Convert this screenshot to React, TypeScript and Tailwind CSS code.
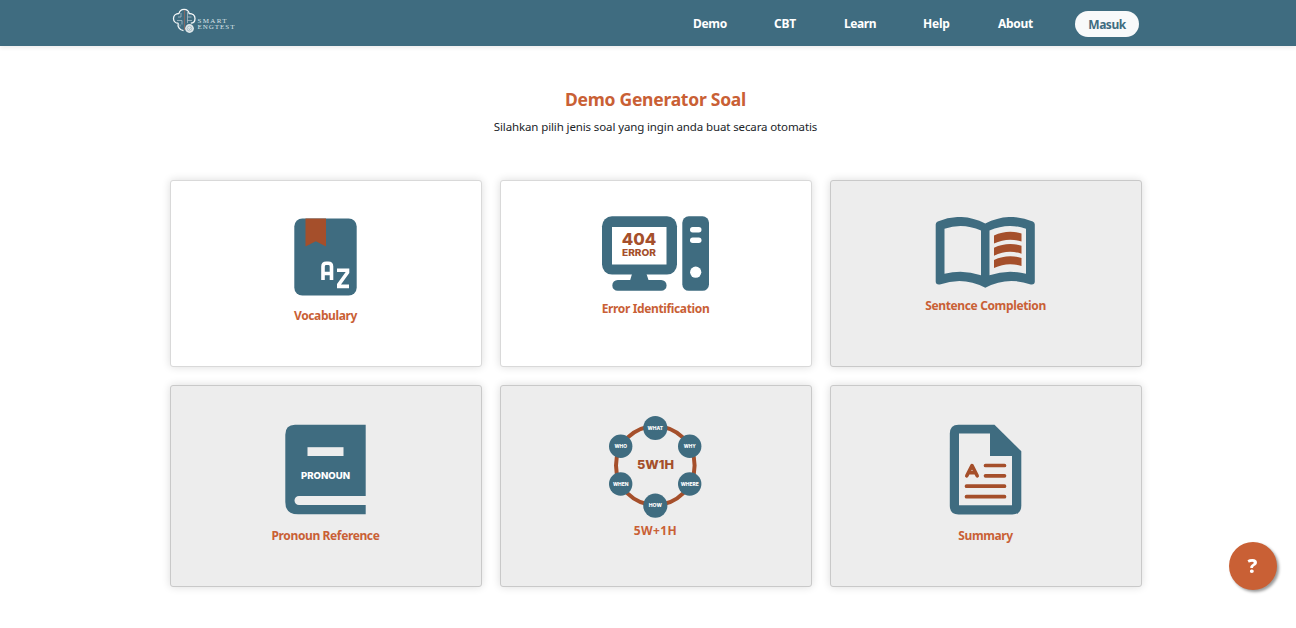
import type { ReactNode } from "react";

const BLUE = "#3f6c80";
const RUST = "#a54f2b";

function Logo() {
  return (
    <svg width="64" height="28" viewBox="172 7 64 28" fill="none">
      <path
        d="M179 13.500a5.200 5.200 0 0 1 10.200 0c3.400 0 5.800 2 5.800 4.900 0 2.700-1.800 4.600-4.200 4.800M179 13.500c-3.300 0-5.500 2.100-5.500 4.900 0 2.800 2 4.800 4.800 4.800M178.300 23c-1 3.500 1 7.200 5.200 7.600"
        stroke="#f4f7f8"
        strokeWidth="1.300"
      />
      <path
        d="M181 13v4h-3M187.500 12v5h4M177 20.500h5v4M187 20.500h5M180 26.500v-2M187.500 17v6"
        stroke="#a9bdc6"
        strokeWidth="0.800"
      />
      <path d="M184.500 10v20" stroke="#8d6a62" strokeWidth="0.900" />
      <circle cx="189.500" cy="28.500" r="4.400" fill="#dfe7ea" />
      <circle cx="189.500" cy="28.500" r="2.400" stroke="#a5bac4" strokeWidth="0.800" />
      <path d="m188.500 28.500 1 1 1.600-2" stroke="#8aa5b1" strokeWidth="0.700" />
      <g fill="#dbe4e8" fontFamily="Liberation Serif, serif" fontSize="7">
        <text x="197.500" y="23" textLength="29">SMART</text>
        <text x="197.500" y="29.300" textLength="37">ENGTEST</text>
      </g>
    </svg>
  );
}

function VocabularyIcon() {
  return (
    <svg width="63" height="78" viewBox="294 218 63 78">
      <rect x="294.300" y="218.500" width="62.400" height="77" rx="8" fill={BLUE} />
      <path d="M305.500 218.500h20.500v28l-10.200-5.200-10.300 5.200z" fill={RUST} />
      <g fill="none" stroke="#fff" strokeWidth="3.600">
        <path d="M323 280v-13.500q0-3.200 3.200-3.200h2.100q3.200 0 3.200 3.200V280M323 273.500h8.500" />
        <path d="M337 270.300h10.500v2.200l-8.700 12v1.900H349" />
      </g>
    </svg>
  );
}

function ErrorIcon() {
  return (
    <svg width="109" height="76" viewBox="601 216 109 76">
      <rect x="602" y="216.300" width="75" height="58.300" rx="10" fill={BLUE} />
      <rect x="612" y="227" width="54.500" height="37.500" fill="#fff" />
      <path
        d="M632 274h14.500l2 6h12.700a5.300 5.300 0 0 1 0 10.800h-33.500h-10a5.300 5.300 0 0 1 0-10.800h12.500z"
        fill={BLUE}
      />
      <rect x="682.300" y="216.300" width="26.700" height="74.500" rx="6.500" fill={BLUE} />
      <rect x="690" y="227" width="11.500" height="5.500" rx="2.700" fill="#fff" />
      <rect x="690" y="237.500" width="11.500" height="5.500" rx="2.700" fill="#fff" />
      <circle cx="695.700" cy="272.200" r="5.600" fill="#fff" />
      <g fill={RUST} fontFamily="Inter, sans-serif" textAnchor="middle">
        <text x="639" y="244.800" fontSize="16.500" fontWeight="800" textLength="34.500" lengthAdjust="spacingAndGlyphs">
          404
        </text>
        <text x="639" y="255.800" fontSize="9.500" fontWeight="800" textLength="34" lengthAdjust="spacingAndGlyphs">
          ERROR
        </text>
      </g>
    </svg>
  );
}

function OpenBookIcon() {
  return (
    <svg width="101" height="71" viewBox="935 217 101 71">
      <path
        d="M935.700 224.500q0-2 2-3 24-10 47.600 2 23.400-12 47.500-2 2 1 2 3v57q0 3.500-4 3-23.500-8.500-45.500 3.200-22-11.700-45.500-3.200-4.100.500-4.100-3z"
        fill={BLUE}
      />
      <path d="M944.500 228.800q18-6.500 36.500 1.700v44.800q-18-6.300-36.500-1.500z" fill="#ededed" />
      <path d="M1026 228.800q-18-6.500-36.500 1.700v44.800q18-6.300 36.500-1.500z" fill="#ededed" />
      <g fill={RUST}>
        <path d="M994 235.500q13.500-6.200 27.500-2v8q-14-4.500-27.500 2z" />
        <path d="M994 247.700q13.500-6.200 27.500-2v8q-14-4.500-27.500 2z" />
        <path d="M994 260q13.500-6.200 27.500-2v8q-14-4.500-27.500 2z" />
      </g>
    </svg>
  );
}

function PronounIcon() {
  return (
    <svg width="81" height="91" viewBox="285 424 81 91">
      <path
        d="M295 424.700h70.700v71.300H299a4.500 4.500 0 0 0 0 9h66.700v9.300H298q-12.700 0-12.700-12.300v-67.300q0-10 9.700-10z"
        fill={BLUE}
      />
      <rect x="307.500" y="447.200" width="36" height="8.800" fill="#ededed" />
      <text
        x="325.500"
        y="478.900"
        fontFamily="Inter, sans-serif"
        fontSize="9.500"
        fontWeight="800"
        fill="#fff"
        textAnchor="middle"
        textLength="49"
        lengthAdjust="spacingAndGlyphs"
      >
        PRONOUN
      </text>
    </svg>
  );
}

const QUESTION_NODES = [
  { word: "WHAT", x: 655.3, y: 428, width: 15.5 },
  { word: "WHY", x: 689.7, y: 446.3, width: 12 },
  { word: "WHERE", x: 689.7, y: 484, width: 18 },
  { word: "HOW", x: 655.3, y: 505.7, width: 13 },
  { word: "WHEN", x: 620.7, y: 484, width: 15.5 },
  { word: "WHO", x: 620.7, y: 446.3, width: 12.5 },
];

function QuestionRingIcon() {
  return (
    <svg width="95" height="103" viewBox="608 415 95 103">
      <circle cx="655.300" cy="465.500" r="39.300" fill="none" stroke={RUST} strokeWidth="4" />
      {QUESTION_NODES.map((n) => (
        <g key={n.word}>
          <circle cx={n.x} cy={n.y} r={n.x === 655.3 ? 12.1 : 11.7} fill={BLUE} />
          <text
            x={n.x}
            y={n.y + 1.7}
            fontFamily="Inter, sans-serif"
            fontSize="4.700"
            fontWeight="800"
            fill="#fff"
            textAnchor="middle"
            textLength={n.width}
            lengthAdjust="spacingAndGlyphs"
          >
            {n.word}
          </text>
        </g>
      ))}
      <text
        x="655.500"
        y="469.200"
        fontFamily="Inter, sans-serif"
        fontSize="12.200"
        fontWeight="800"
        fill={RUST}
        textAnchor="middle"
        textLength="37"
        lengthAdjust="spacingAndGlyphs"
      >
        5W1H
      </text>
    </svg>
  );
}

function SummaryIcon() {
  return (
    <svg width="73" height="91" viewBox="949 424 73 91">
      <path
        d="M958.500 424.700H994.500l26.800 26.500V505.500q0 9-9 9H958.500q-8.700 0-8.700-9v-71.800q0-9 8.700-9z"
        fill={BLUE}
      />
      <path d="M959 433.500h31V456h22v49.200h-53z" fill="#ededed" />
      <g fill="none" stroke={RUST} strokeWidth="3.700" strokeLinecap="round" strokeLinejoin="round">
        <path d="M985.500 465.500h19M985.500 475.800h19M966.500 486.200h38M966.500 496.700h38" />
        <path d="m966.800 475.800 5.200-10.200 5.200 10.200M969.500 472.800h5" strokeWidth="3.600" />
      </g>
    </svg>
  );
}

type CardProps = { icon: ReactNode; label: string; pad: string; gap: string; tone: string; tracking: string };

function Card({ icon, label, pad, gap, tone, tracking }: CardProps) {
  return (
    <a
      href="#"
      className={`flex flex-col items-center rounded-[3px] border pr-px shadow-[0_0_8px_rgba(0,0,0,0.14)] ${tone} ${pad} ${gap}`}
    >
      {icon}
      <span className={`text-[12px] leading-[18px] font-bold whitespace-nowrap text-[#c96035] ${tracking}`}>
        {label}
      </span>
    </a>
  );
}

const ACTIVE = "bg-white border-[#d9d9d9]";
const MUTED = "bg-[#ededed] border-[#c9c9c9]";

const CARDS: CardProps[] = [
  { icon: <VocabularyIcon />, label: "Vocabulary", pad: "pt-[37px]", gap: "gap-[11px]", tone: ACTIVE, tracking: "tracking-[-0.38px]" },
  { icon: <ErrorIcon />, label: "Error Identification", pad: "pt-[35px]", gap: "gap-[8px]", tone: ACTIVE, tracking: "tracking-[-0.36px]" },
  { icon: <OpenBookIcon />, label: "Sentence Completion", pad: "pt-[36px]", gap: "gap-[9px]", tone: MUTED, tracking: "tracking-[-0.36px]" },
  { icon: <PronounIcon />, label: "Pronoun Reference", pad: "pt-[38px]", gap: "gap-[12px]", tone: MUTED, tracking: "tracking-[-0.38px]" },
  { icon: <QuestionRingIcon />, label: "5W+1H", pad: "pt-[29px]", gap: "gap-[4px]", tone: MUTED, tracking: "tracking-[0.4px]" },
  { icon: <SummaryIcon />, label: "Summary", pad: "pt-[38px]", gap: "gap-[12px]", tone: MUTED, tracking: "tracking-[-0.42px]" },
];

export default function App() {
  return (
    <div className="flex h-[628px] flex-col overflow-hidden bg-white font-['Noto_Sans',sans-serif]">
      <header className="flex h-[46px] shrink-0 items-start bg-[#3f6c80] pr-[157px] pl-[172px] shadow-[0_2px_4px_rgba(0,0,0,0.075)]">
        <a href="#" className="mt-[7px]">
          <Logo />
        </a>
        <nav className="ml-auto flex items-start text-[12px] leading-[18px] font-bold text-white">
          <a href="#" className="mt-[15px] w-[81px] tracking-[-0.3px]">Demo</a>
          <a href="#" className="mt-[15px] w-[70px] tracking-[-0.2px]">CBT</a>
          <a href="#" className="mt-[15px] w-[79px] tracking-[-0.4px]">Learn</a>
          <a href="#" className="mt-[15px] w-[75px] tracking-[-0.2px]">Help</a>
          <a href="#" className="mt-[15px] w-[77px] tracking-[-0.3px]">About</a>
          <a
            href="#"
            className="mt-[11px] flex h-[26px] w-[64px] items-center justify-center rounded-full bg-[#f8f9fa] pt-px tracking-[-0.5px] text-[#3f6c80]"
          >
            Masuk
          </a>
        </nav>
      </header>

      <main className="flex flex-col pr-[154px] pl-[170px]">
        <div className="flex flex-col items-center pt-[40px] pr-px">
          <h1 className="text-[17.5px] leading-[27px] font-bold tracking-[-0.25px] text-[#c96035]">
            Demo Generator Soal
          </h1>
          <p className="mt-[5px] text-[11.5px] leading-[18px] tracking-[-0.12px] text-[#212529]">
            Silahkan pilih jenis soal yang ingin anda buat secara otomatis
          </p>
        </div>
        <div className="mt-[44px] grid grid-cols-[312px_312px_312px] grid-rows-[187px_202px] gap-[18px]">
          {CARDS.map((card) => (
            <Card key={card.label} {...card} />
          ))}
        </div>
      </main>

      <button
        type="button"
        aria-label="Help"
        className="fixed top-[542px] left-[1229px] flex size-[48px] items-center justify-center rounded-full bg-[#c96035] pr-px text-[20px] font-extrabold text-white shadow-[2px_2px_3px_rgba(0,0,0,0.4)]"
      >
        ?
      </button>
    </div>
  );
}
